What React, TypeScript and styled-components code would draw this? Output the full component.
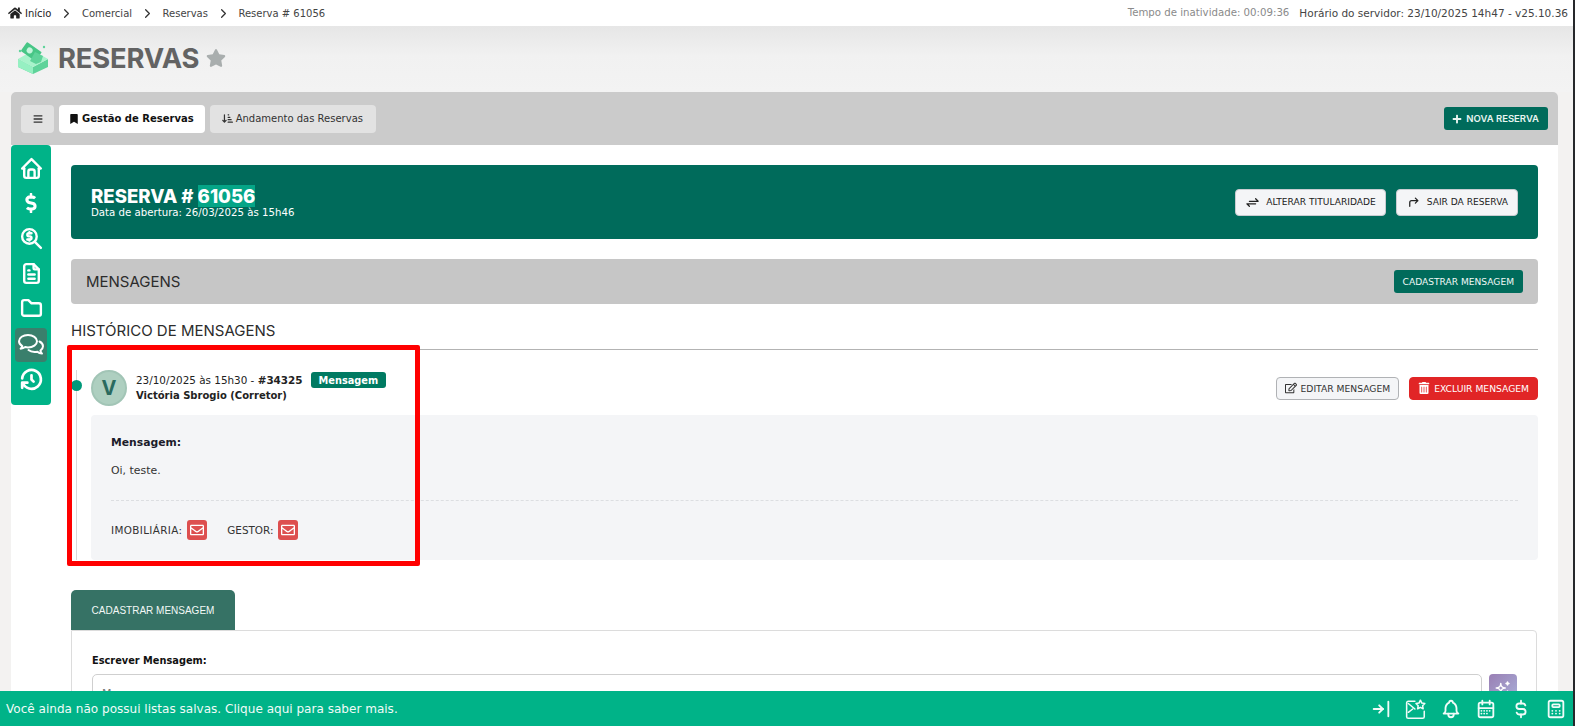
import React from 'react';
import styled, { createGlobalStyle } from 'styled-components';
import { FaHome, FaStar, FaBookmark, FaBars, FaPlus, FaRegEdit, FaTrashAlt, FaRegEnvelope, FaDollarSign } from 'react-icons/fa';
import { FaArrowDownShortWide } from 'react-icons/fa6';
import {
    TbHome, TbCurrencyDollar, TbZoomMoney, TbFileText, TbFolder, TbHistory,
    TbArrowBarToRight, TbBell, TbCalendarMonth, TbCalculator, TbArrowsExchange, TbCornerUpRight, TbChevronRight,
    TbSparkles,
} from 'react-icons/tb';

const GlobalStyle = createGlobalStyle`
    html, body {
        margin: 0;
        padding: 0;
        height: 726px;
        overflow: hidden;
        background: #f3f2f1;
    }
    * { box-sizing: border-box; }
`;

const BODY_FONT = '"DejaVu Sans", Verdana, sans-serif';
const HEAD_FONT = 'Inter, "Noto Sans", sans-serif';

const Page = styled.div`
    position: relative;
    width: 1575px;
    height: 726px;
    overflow: hidden;
    border-right: 2px solid #26282b;
    font-family: ${BODY_FONT};
    color: #222;
    display: flex;
    flex-direction: column;
`;

const TopBar = styled.div`
    height: 26px;
    flex-shrink: 0;
    background: #fff;
    display: flex;
    align-items: center;
    justify-content: space-between;
    padding: 0 5px 0 8px;
    font-size: 10px;
    color: #444;
`;

const Crumbs = styled.div`
    display: flex;
    align-items: center;
    svg { flex-shrink: 0; }
`;

const CrumbHome = styled.span`
    display: flex;
    align-items: center;
    gap: 3px;
    color: #222;
`;

const CrumbText = styled.span`
    color: #444;
`;

const CrumbSep = styled.span`
    display: flex;
    width: 30.5px;
    justify-content: center;
    color: #333;
`;

const ServerInfo = styled.div`
    display: flex;
    gap: 10px;
    font-size: 10.5px;
`;

const Idle = styled.span`
    color: #8a8a8a;
    font-size: 10.2px;
`;

const Head = styled.div`
    height: 66px;
    flex-shrink: 0;
    display: flex;
    align-items: center;
    gap: 8px;
    padding: 0 0 2px 17px;
    background: linear-gradient(#e6e6e6, #f1f1f1 30px, #f3f3f3);
`;

const HeadTitle = styled.h1`
    margin: 0 0 0 1px;
    font-family: ${HEAD_FONT};
    font-size: 27.4px;
    font-weight: 700;
    color: #636363;
    letter-spacing: -0.2px;
`;

const HeadStar = styled.span`
    display: flex;
    color: #a9aeae;
    margin-left: -1px;
`;

const Panel = styled.div`
    position: relative;
    width: 1547px;
    margin-left: 11px;
    flex: 1;
    background: #fff;
    border-radius: 5px 5px 0 0;
`;

const Toolbar = styled.div`
    height: 53px;
    background: #cbcbcb;
    border-radius: 5px 5px 0 0;
    display: flex;
    align-items: center;
    gap: 5px;
    padding: 0 10px;
`;

const ToolButton = styled.button<{ $active?: boolean }>`
    height: 28px;
    border: none;
    border-radius: 4px;
    display: flex;
    align-items: center;
    gap: 3px;
    padding: ${(p) => (p.$active ? '0 11px 0 10px' : '0 13px 0 12px')};
    font-family: ${BODY_FONT};
    font-size: 10px;
    font-weight: ${(p) => (p.$active ? 700 : 400)};
    color: ${(p) => (p.$active ? '#111' : '#333')};
    background: ${(p) => (p.$active ? '#fff' : '#e2e2e2')};
`;

const MenuButton = styled(ToolButton)`
    width: 33px;
    padding: 0;
    justify-content: center;
`;

const NewButton = styled.button`
    margin-left: auto;
    height: 23px;
    border: none;
    border-radius: 3px;
    background: #006b5b;
    color: #e8f5f1;
    display: flex;
    align-items: center;
    gap: 4px;
    padding: 0 9px 0 8px;
    font-family: ${HEAD_FONT};
    font-size: 9.5px;
    font-weight: 600;
`;

const Sidebar = styled.nav`
    position: absolute;
    left: 0;
    top: 53px;
    width: 40px;
    height: 260px;
    background: #00b388;
    border-radius: 4px;
    padding: 6px 4px;
    display: flex;
    flex-direction: column;
    color: #fff;
    z-index: 2;
`;

const SideItem = styled.div<{ $active?: boolean }>`
    height: 34px;
    margin: ${(p) => (p.$active ? '2px 0 0' : '0 0 1px')};
    display: flex;
    align-items: center;
    justify-content: center;
    border-radius: 4px;
    background: ${(p) => (p.$active ? '#3a7f6c' : 'transparent')};
`;

const Content = styled.div`
    padding: 20px 20px 0 60px;
`;

const Banner = styled.div`
    height: 74px;
    background: #006b5b;
    border-radius: 4px;
    color: #fff;
    display: flex;
    align-items: center;
    justify-content: space-between;
    padding: 0 20px;
`;

const BannerTitle = styled.div`
    font-family: ${HEAD_FONT};
    font-size: 18.6px;
    font-weight: 800;
    line-height: 22px;
`;

const Highlight = styled.span`
    background: #05a587;
`;

const BannerSub = styled.div`
    font-size: 10.2px;
    line-height: 12px;
`;

const BannerActions = styled.div`
    display: flex;
    gap: 10px;
`;

const BannerButton = styled.button`
    height: 27px;
    border: 1px solid #c9ccd1;
    border-radius: 4px;
    background: #f4f5f7;
    color: #222;
    display: flex;
    align-items: center;
    gap: 6px;
    padding: 0 9px;
    font-family: ${BODY_FONT};
    font-size: 9.1px;
`;

const SectionBar = styled.div`
    margin-top: 20px;
    height: 45px;
    background: #c6c6c6;
    border-radius: 4px;
    display: flex;
    align-items: center;
    justify-content: space-between;
    padding: 0 15px;
`;

const SectionTitle = styled.span`
    font-family: ${HEAD_FONT};
    font-size: 15px;
    color: #2c2c2c;
`;

const SectionButton = styled.button`
    height: 23px;
    border: none;
    border-radius: 3px;
    background: #006b5b;
    color: #f0f8f6;
    padding: 0 9px;
    font-family: ${BODY_FONT};
    font-size: 9.1px;
`;

const HistoryTitle = styled.div`
    margin-top: 17px;
    height: 29px;
    border-bottom: 1px solid #b3b3b3;
    font-family: ${HEAD_FONT};
    font-size: 15px;
    color: #2c2c2c;
    line-height: 20px;
`;

const Timeline = styled.div`
    position: relative;
    padding: 20px 0 0 20px;
    &::before {
        content: '';
        position: absolute;
        left: 5px;
        top: 20px;
        bottom: 0;
        width: 1px;
        background: #d9d9d9;
    }
`;

const Dot = styled.span`
    position: absolute;
    left: 0;
    top: 30px;
    width: 11px;
    height: 11px;
    border-radius: 50%;
    background: #00997a;
`;

const MessageHead = styled.div`
    display: flex;
    align-items: center;
    height: 36px;
`;

const Avatar = styled.div`
    width: 36px;
    height: 36px;
    border-radius: 50%;
    background: #aecfc0;
    border: 2px solid #a2c5b6;
    color: #2a6a5e;
    font-family: ${HEAD_FONT};
    font-size: 20px;
    font-weight: 700;
    display: flex;
    align-items: center;
    justify-content: center;
`;

const Meta = styled.div`
    margin-left: 9px;
    font-size: 10.4px;
    line-height: 15px;
    color: #222;
    margin-top: -1px;
`;

const MetaLine = styled.div`
    display: flex;
    align-items: center;
    gap: 8px;
`;

const Author = styled.div`
    font-size: 10px;
    font-weight: 700;
`;

const Badge = styled.span`
    height: 16px;
    background: #007a62;
    color: #fff;
    border-radius: 3px;
    padding: 0 8px;
    font-size: 9.8px;
    font-weight: 700;
    display: flex;
    align-items: center;
`;

const MessageActions = styled.div`
    margin-left: auto;
    display: flex;
    gap: 10px;
`;

const ActionButton = styled.button<{ $danger?: boolean }>`
    height: 23px;
    border-radius: 4px;
    border: 1px solid ${(p) => (p.$danger ? '#e12526' : '#b0b2b5')};
    background: ${(p) => (p.$danger ? '#e12526' : '#f4f5f7')};
    color: ${(p) => (p.$danger ? '#fff' : '#333')};
    display: flex;
    align-items: center;
    gap: 4px;
    padding: 0 8px;
    font-family: ${BODY_FONT};
    font-size: 9.2px;
`;

const MessageBox = styled.div`
    margin-top: 9px;
    height: 145px;
    background: #f4f5f7;
    border-radius: 4px;
    padding: 20px 20px 0;
`;

const MessageLabel = styled.div`
    font-size: 10.8px;
    font-weight: 700;
    line-height: 16px;
    color: #1c1c2a;
`;

const MessageText = styled.div`
    margin-top: 12px;
    font-size: 10.9px;
    line-height: 16px;
    color: #333;
`;

const Divider = styled.div`
    margin-top: 21px;
    border-top: 1px dashed #dcdee1;
`;

const Recipients = styled.div`
    margin-top: 19px;
    display: flex;
    align-items: center;
    font-size: 10.4px;
    color: #333;
`;

const RecipientLabel = styled.span<{ $spacing?: number }>`
    letter-spacing: ${(p) => p.$spacing ?? 0}px;
`;

const MailBadge = styled.span`
    width: 20px;
    height: 20px;
    margin: 0 20px 0 5px;
    border-radius: 3px;
    background: #dd4f4f;
    color: #fff;
    display: flex;
    align-items: center;
    justify-content: center;
`;

const FormTab = styled.div`
    margin-top: 30px;
    width: 164px;
    height: 40px;
    background: #367265;
    border-radius: 5px 5px 0 0;
    color: #f2f8f6;
    display: flex;
    align-items: center;
    justify-content: center;
    font-family: "Liberation Sans", Arial, sans-serif;
    font-size: 10px;
`;

const FormCard = styled.div`
    width: 1466px;
    height: 120px;
    border: 1px solid #dcdcdc;
    border-radius: 0 4px 0 0;
    padding: 24px 19px 0 20px;
`;

const FormLabel = styled.div`
    font-size: 9.8px;
    font-weight: 700;
    line-height: 12px;
    color: #111;
`;

const FormRow = styled.div`
    margin-top: 7px;
    display: flex;
    gap: 7px;
`;

const TextBox = styled.div`
    flex: 1;
    height: 60px;
    border: 1px solid #cfcfcf;
    border-radius: 5px;
    padding: 12px 9px;
    font-size: 11px;
    color: #777;
`;

const MagicButton = styled.div`
    width: 28px;
    height: 34px;
    border-radius: 4px;
    background: linear-gradient(135deg, #9a7fb4, #a9b4dc);
    color: #fff;
    display: flex;
    justify-content: center;
    padding-top: 5px;
`;

const Footer = styled.footer`
    position: absolute;
    left: 0;
    right: -2px;
    bottom: 0;
    height: 35px;
    background: #00b388;
    color: #f0fbf8;
    display: flex;
    align-items: center;
    justify-content: space-between;
    padding: 0 8px 0 6px;
    font-size: 12.05px;
    z-index: 3;
`;

const FooterIcons = styled.div`
    display: flex;
    align-items: center;
    gap: 13px;
`;

// annotation somebody drew over the screenshot
const RedFrame = styled.div`
    position: absolute;
    left: 67px;
    top: 345px;
    width: 353px;
    height: 221px;
    border: 5px solid #ff0000;
    border-radius: 2px;
    z-index: 1;
    pointer-events: none;
`;

const Logo = () => (
    <svg width="32" height="32" viewBox="0 0 32 32">
        <path d="M1 17l15 8 15-8v8l-15 7-15-7z" fill="#5fd39a" />
        <path d="M1 17l15 8v7l-15-7z" fill="#96f0c2" />
        <path d="M1 17l7-4 16 0 7 4-15 8z" fill="#a8f3cb" />
        <g transform="rotate(35 14 10)">
            <rect x="5" y="4" width="18" height="11" rx="1" fill="#47c686" />
            <circle cx="12" cy="9.500" r="3" fill="#c5f5dc" />
        </g>
        <path d="M13 19l5-9 8 4-2 6-5 2z" fill="#5fd39a" />
        <circle cx="3" cy="9" r="1.200" fill="#5fd39a" />
        <circle cx="27" cy="5" r="1.200" fill="#5fd39a" />
    </svg>
);

const ChatBubbles = () => (
    <svg width="28" height="26" viewBox="0 0 28 26" fill="none" stroke="currentColor" strokeWidth="2" strokeLinejoin="round" strokeLinecap="round">
        <path d="M11 3C6 3 2 5.700 2 9.200c0 2 1.300 3.700 3.300 4.900-.3 1-.9 1.900-1.700 2.600 1.800 0 3.400-.6 4.600-1.600 1 .2 1.900.3 2.800.3 5 0 9-2.800 9-6.200S16 3 11 3z" />
        <path d="M22.500 9.500c2.200 1.100 3.500 2.900 3.500 4.800 0 1.700-1 3.200-2.600 4.300.2 1.100.7 2.100 1.600 3-1.900-.1-3.500-.8-4.600-1.900-.9.200-1.900.3-2.900.3-2.400 0-4.600-.7-6-1.900" />
    </svg>
);

const FavList = () => (
    <svg width="22" height="22" viewBox="0 0 20 20" fill="none" stroke="currentColor" strokeWidth="1.400" strokeLinejoin="round" strokeLinecap="round">
        <path d="M9 3H3a1.500 1.500 0 0 0-1.500 1.500V17A1.500 1.500 0 0 0 3 18.500h13a1.500 1.500 0 0 0 1.500-1.500v-5" />
        <path d="M3 5l6 5" />
        <path d="M3 13l4-3" />
        <path d="M14 2l1.300 2.600 2.700.4-2 2 .5 2.800-2.500-1.300-2.500 1.300.5-2.800-2-2 2.700-.4z" />
    </svg>
);

const App = () => {
    return (
        <Page>
            <GlobalStyle />
            <TopBar>
                <Crumbs>
                    <CrumbHome><FaHome size={14} /> Início</CrumbHome>
                    <CrumbSep><TbChevronRight size={15} /></CrumbSep>
                    <CrumbText>Comercial</CrumbText>
                    <CrumbSep><TbChevronRight size={15} /></CrumbSep>
                    <CrumbText>Reservas</CrumbText>
                    <CrumbSep><TbChevronRight size={15} /></CrumbSep>
                    <CrumbText>Reserva # 61056</CrumbText>
                </Crumbs>
                <ServerInfo>
                    <Idle>Tempo de inatividade: 00:09:36</Idle>
                    <span>Horário do servidor: 23/10/2025 14h47 - v25.10.36</span>
                </ServerInfo>
            </TopBar>
            <Head>
                <Logo />
                <HeadTitle>RESERVAS</HeadTitle>
                <HeadStar><FaStar size={20} /></HeadStar>
            </Head>
            <Panel>
                <Toolbar>
                    <MenuButton><FaBars size={10} /></MenuButton>
                    <ToolButton $active><FaBookmark size={10} /> Gestão de Reservas</ToolButton>
                    <ToolButton><FaArrowDownShortWide size={11} /> Andamento das Reservas</ToolButton>
                    <NewButton><FaPlus size={10} /> NOVA RESERVA</NewButton>
                </Toolbar>
                <Sidebar>
                    <SideItem><TbHome size={25} strokeWidth={2.3} /></SideItem>
                    <SideItem><FaDollarSign size={20} /></SideItem>
                    <SideItem><TbZoomMoney size={25} strokeWidth={2.3} /></SideItem>
                    <SideItem><TbFileText size={25} strokeWidth={2.3} /></SideItem>
                    <SideItem><TbFolder size={25} strokeWidth={2.3} /></SideItem>
                    <SideItem $active><ChatBubbles /></SideItem>
                    <SideItem><TbHistory size={25} strokeWidth={2.6} /></SideItem>
                </Sidebar>
                <Content>
                    <Banner>
                        <div>
                            <BannerTitle>RESERVA # <Highlight>61056</Highlight></BannerTitle>
                            <BannerSub>Data de abertura: 26/03/2025 às 15h46</BannerSub>
                        </div>
                        <BannerActions>
                            <BannerButton><TbArrowsExchange size={15} /> ALTERAR TITULARIDADE</BannerButton>
                            <BannerButton><TbCornerUpRight size={15} /> SAIR DA RESERVA</BannerButton>
                        </BannerActions>
                    </Banner>
                    <SectionBar>
                        <SectionTitle>MENSAGENS</SectionTitle>
                        <SectionButton>CADASTRAR MENSAGEM</SectionButton>
                    </SectionBar>
                    <HistoryTitle>HISTÓRICO DE MENSAGENS</HistoryTitle>
                    <Timeline>
                        <Dot />
                        <MessageHead>
                            <Avatar>V</Avatar>
                            <Meta>
                                <MetaLine>
                                    <span>23/10/2025 às 15h30 - <b>#34325</b></span>
                                    <Badge>Mensagem</Badge>
                                </MetaLine>
                                <Author>Victória Sbrogio (Corretor)</Author>
                            </Meta>
                            <MessageActions>
                                <ActionButton><FaRegEdit size={12} /> EDITAR MENSAGEM</ActionButton>
                                <ActionButton $danger><FaTrashAlt size={12} /> EXCLUIR MENSAGEM</ActionButton>
                            </MessageActions>
                        </MessageHead>
                        <MessageBox>
                            <MessageLabel>Mensagem:</MessageLabel>
                            <MessageText>Oi, teste.</MessageText>
                            <Divider />
                            <Recipients>
                                <RecipientLabel $spacing={0.35}>IMOBILIÁRIA:</RecipientLabel>
                                <MailBadge><FaRegEnvelope size={14} /></MailBadge>
                                <RecipientLabel>GESTOR:</RecipientLabel>
                                <MailBadge><FaRegEnvelope size={14} /></MailBadge>
                            </Recipients>
                        </MessageBox>
                    </Timeline>
                    <FormTab>CADASTRAR MENSAGEM</FormTab>
                    <FormCard>
                        <FormLabel>Escrever Mensagem:</FormLabel>
                        <FormRow>
                            <TextBox>M</TextBox>
                            <MagicButton><TbSparkles size={18} /></MagicButton>
                        </FormRow>
                    </FormCard>
                </Content>
            </Panel>
            <RedFrame />
            <Footer>
                <span>Você ainda não possui listas salvas. Clique aqui para saber mais.</span>
                <FooterIcons>
                    <TbArrowBarToRight size={22} />
                    <FavList />
                    <TbBell size={22} />
                    <TbCalendarMonth size={22} />
                    <TbCurrencyDollar size={22} />
                    <TbCalculator size={22} />
                </FooterIcons>
            </Footer>
        </Page>
    );
};

export default App;
